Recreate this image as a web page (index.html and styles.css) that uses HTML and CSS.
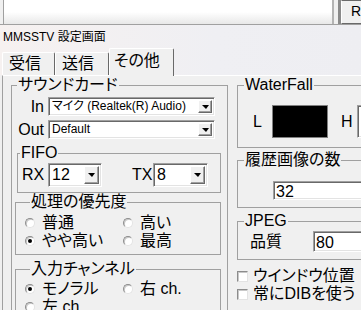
FILE: index.html
```html
<!DOCTYPE html>
<html lang="ja">
<head>
    <meta charset="UTF-8">
    <meta name="viewport" content="width=device-width, initial-scale=1.0">
    <title>MMSSTV 設定画面</title>
    <link rel="stylesheet" href="styles.css">
</head>
<body>
    <div class="topbar">
        <div class="listview"></div>
        <div class="splitter"></div>
        <div class="rbtn">R</div>
    </div>

    <div class="head">
        <div class="caption">MMSSTV 設定画面</div>
        <div class="tabs">
            <div class="tab tab-rx">受信</div>
            <div class="tab tab-tx">送信</div>
            <div class="tab active">その他</div>
        </div>
    </div>

    <div class="panel">
        <div class="col-left">
            <fieldset class="grp sound">
                <legend>サウンドカード</legend>
                <div class="line line-in">
                    <span class="lbl">In</span>
                    <div class="combo combo-dev"><span class="val">マイク (Realtek(R) Audio)</span><span class="drop"></span></div>
                </div>
                <div class="line line-out">
                    <span class="lbl">Out</span>
                    <div class="combo combo-dev"><span class="val">Default</span><span class="drop"></span></div>
                </div>

                <fieldset class="grp fifo">
                    <legend>FIFO</legend>
                    <div class="fifo-row">
                        <span class="fifo-lbl">RX</span>
                        <div class="combo combo-num combo-rx"><span class="val">12</span><span class="drop"></span></div>
                        <span class="fifo-lbl tx-lbl">TX</span>
                        <div class="combo combo-num combo-tx"><span class="val">8</span><span class="drop"></span></div>
                    </div>
                </fieldset>

                <fieldset class="grp prio">
                    <legend>処理の優先度</legend>
                    <div class="radios">
                        <label class="opt"><span class="radio"></span>普通</label>
                        <label class="opt"><span class="radio"></span>高い</label>
                        <label class="opt"><span class="radio on"></span>やや高い</label>
                        <label class="opt"><span class="radio"></span>最高</label>
                    </div>
                </fieldset>

                <fieldset class="grp chan">
                    <legend>入力チャンネル</legend>
                    <div class="radios">
                        <label class="opt"><span class="radio on"></span>モノラル</label>
                        <label class="opt"><span class="radio"></span>右 ch.</label>
                        <label class="opt"><span class="radio"></span>左 ch.</label>
                    </div>
                </fieldset>
            </fieldset>
        </div>

        <div class="col-right">
            <fieldset class="grp wf">
                <legend>WaterFall</legend>
                <div class="wf-row">
                    <span class="wf-lbl">L</span>
                    <div class="swatch swatch-low"></div>
                    <span class="wf-lbl wf-h">H</span>
                    <div class="swatch swatch-high"></div>
                </div>
            </fieldset>

            <fieldset class="grp hist">
                <legend>履歴画像の数</legend>
                <div class="edit edit-hist">32</div>
            </fieldset>

            <fieldset class="grp jpeg">
                <legend>JPEG</legend>
                <div class="jpeg-row">
                    <span class="q-lbl">品質</span>
                    <div class="edit edit-q">80</div>
                </div>
            </fieldset>

            <div class="checks">
                <label class="chk"><span class="box"></span>ウインドウ位置</label>
                <label class="chk"><span class="box"></span>常にDIBを使う</label>
            </div>
        </div>
    </div>
</body>
</html>
```

FILE: styles.css
```css
* {
    box-sizing: border-box;
}
html, body {
    margin: 0;
    height: 100%;
    overflow: hidden;
}
body {
    background: #f0f0f0;
    color: #000;
    font-family: "Liberation Sans", "Noto Sans CJK JP", sans-serif;
    font-size: 16px;
    font-feature-settings: "palt";
}

/* window strip above the dialog */
.topbar {
    display: flex;
    height: 25px;
    border-bottom: 1px solid #a0a0a0;
}
.listview {
    width: 330px;
    margin-left: 3px;
    border-left: 1px solid #a0a0a0;
    background: linear-gradient(#fff 50%, #e8e8e8);
}
.splitter {
    width: 9px;
    border-left: 2px solid #b4b4b4;
    border-right: 3px solid #8a8a8a;
}
.rbtn {
    flex: 1;
    border-top: 1px solid #696969;
    border-bottom: 1px solid #696969;
    border-left: 1px solid #fff;
    padding-left: 9px;
    font-size: 14px;
    line-height: 21px;
}

/* caption + tabs */
.head {
    background: linear-gradient(90deg, #f6f1f0, #efeff3 60%, #eeeef2);
}
.caption {
    height: 23px;
    padding: 4px 3px 0;
    font-size: 12px;
    line-height: 16px;
}
.tabs {
    display: flex;
    align-items: flex-end;
    height: 27px;
    padding-left: 2px;
}
.tab {
    height: 23px;
    padding: 2px 0 0 6px;
    border-top: 1px solid #fff;
    border-left: 1px solid #fff;
    border-right: 1px solid #696969;
    border-radius: 2px 2px 0 0;
    background: #f0f0f0;
    line-height: 18px;
}
.tab-rx {
    width: 53px;
}
.tab-tx {
    width: 54px;
}
.tab.active {
    position: relative;
    z-index: 1;
    width: 65px;
    height: 28px;
    margin-bottom: -1px;
    padding: 3px 0 0 4px;
}

/* page body */
.panel {
    display: flex;
    width: 600px;
    margin-left: 2px;
    padding-left: 8px;
    border-top: 1px solid #fff;
    border-left: 1px solid #a0a0a0;
}
.col-left {
    width: 217px;
    flex: none;
}
.col-right {
    width: 280px;
    flex: none;
    margin-left: 9px;
}

.grp {
    margin: 0;
    padding: 0;
    min-width: 0;
    border: 1px solid #a0a0a0;
}
.grp legend {
    margin-left: 5px;
    padding: 0 1px;
    line-height: 18px;
}
.sound {
    height: 260px;
}

/* combo boxes and edits */
.combo, .edit, .swatch {
    background: #fff;
    border: 1px solid;
    border-color: #a0a0a0 #fff #fff #a0a0a0;
    box-shadow: inset 1px 1px 0 #696969, inset -1px -1px 0 #e3e3e3;
}
.combo {
    display: flex;
    padding: 2px;
}
.combo .val {
    flex: 1;
    padding-left: 1px;
    white-space: nowrap;
    overflow: hidden;
}
.drop {
    display: flex;
    align-items: center;
    justify-content: center;
    width: 14px;
    background: #f0f0f0;
    border: 1px solid;
    border-color: #fff #696969 #696969 #fff;
    box-shadow: inset -1px -1px 0 #a0a0a0;
}
.drop::after {
    content: "";
    border-left: 4px solid transparent;
    border-right: 3px solid transparent;
    border-top: 4px solid #000;
}

.line {
    display: flex;
    align-items: center;
    height: 19px;
}
.line-in {
    margin-top: 3px;
}
.line-out {
    margin-top: 4px;
}
.lbl {
    width: 32px;
    margin-right: 4px;
    text-align: right;
    line-height: 18px;
}
.combo-dev {
    width: 167px;
    height: 19px;
}
.combo-dev .val {
    font-size: 12px;
    line-height: 13px;
}

/* FIFO */
.fifo {
    margin: 5px 6px 0 5px;
    padding-bottom: 5px;
}
.fifo legend {
    margin-left: 2px;
}
.fifo-row {
    display: flex;
    align-items: center;
    height: 24px;
    margin-top: 1px;
    padding-left: 4px;
}
.fifo-lbl {
    width: 22px;
    margin-right: 4px;
}
.tx-lbl {
    width: 21px;
    margin-left: 30px;
    margin-right: 0;
}
.combo-num {
    height: 24px;
}
.combo-num .val {
    line-height: 18px;
}
.combo-num .drop {
    width: 15px;
}
.combo-rx {
    width: 54px;
}
.combo-tx {
    width: 55px;
}

/* radio groups */
.prio, .chan {
    margin: 0 6px 0 3px;
    padding: 3px 0 4px 9px;
}
.chan {
    margin-top: 5px;
    padding-top: 2px;
}
.radios {
    display: grid;
    grid-template-columns: 98px 1fr;
}
.opt {
    display: flex;
    align-items: center;
    height: 18px;
    line-height: 18px;
}
.radio {
    display: flex;
    align-items: center;
    justify-content: center;
    width: 10px;
    height: 10px;
    margin-right: 7px;
    border-radius: 50%;
    background: #fff;
    border: 1px solid;
    border-color: #8c8c8c #e3e3e3 #e3e3e3 #8c8c8c;
    box-shadow: inset 1px 1px 0 #c8c8c8;
}
.radio.on::after {
    content: "";
    width: 4px;
    height: 4px;
    border-radius: 50%;
    background: #000;
}

/* right column */
.wf {
    padding-bottom: 9px;
}
.wf legend {
    margin-left: 6px;
}
.wf-row {
    display: flex;
    align-items: center;
    height: 33px;
    margin-top: 11px;
    padding-left: 15px;
}
.wf-lbl {
    width: 9px;
    margin-right: 10px;
    line-height: 18px;
}
.wf-h {
    width: 12px;
    margin-left: 13px;
    margin-right: 4px;
}
.swatch {
    height: 33px;
}
.swatch-low {
    width: 56px;
    background: #000;
    border-color: #808080;
    box-shadow: none;
}
.swatch-high {
    width: 60px;
}

.hist {
    margin-top: 3px;
    padding-bottom: 7px;
}
.hist legend, .jpeg legend {
    margin-left: 6px;
}
.edit {
    padding: 1px 0 0 2px;
    line-height: 17px;
}
.edit-hist {
    width: 200px;
    height: 19px;
    margin: 12px 0 0 35px;
}

.jpeg {
    margin-top: 4px;
    padding-bottom: 7px;
}
.jpeg-row {
    display: flex;
    align-items: center;
    height: 21px;
    margin-top: 1px;
    padding-left: 12px;
}
.q-lbl {
    width: 32px;
    margin-right: 31px;
    line-height: 18px;
}
.edit-q {
    width: 150px;
    height: 21px;
    padding-top: 2px;
}

.checks {
    margin-top: 7px;
}
.chk {
    display: flex;
    align-items: center;
    height: 18px;
    line-height: 18px;
    white-space: nowrap;
}
.chk .box {
    width: 11px;
    height: 11px;
    margin-right: 5px;
    background: #fff;
    border: 1px solid;
    border-color: #8c8c8c #e3e3e3 #e3e3e3 #8c8c8c;
    box-shadow: inset 1px 1px 0 #c8c8c8;
}
```
